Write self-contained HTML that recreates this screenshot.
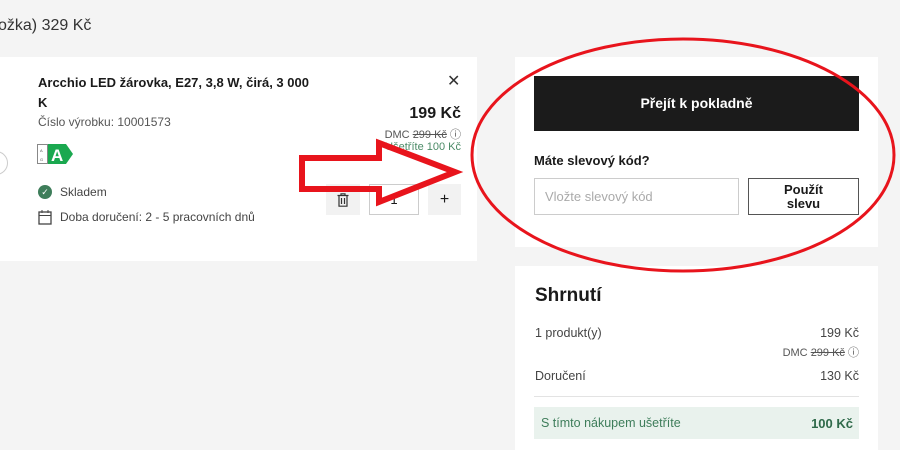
<!DOCTYPE html>
<html><head><meta charset="utf-8"><style>
*{margin:0;padding:0;box-sizing:border-box}
body{width:900px;height:450px;background:#f4f4f4;font-family:"Liberation Sans",sans-serif;color:#1a1a1a;position:relative;overflow:hidden}
.a{position:absolute}
.card{position:absolute;background:#fff}
.g{color:#555}
</style></head><body>
<div class="a" style="left:-2px;top:17px;font-size:16px;color:#333">ožka) 329 Kč</div>

<div class="card" style="left:0;top:57px;width:477px;height:204px"></div>
<div class="a" style="left:-16px;top:151px;width:24px;height:24px;border:1px solid #ccc;border-radius:50%;background:#fff"></div>
<div class="a" style="left:38px;top:73px;font-size:13px;font-weight:bold;line-height:20px;width:280px">Arcchio LED žárovka, E27, 3,8 W, čirá, 3 000 K</div>
<div class="a g" style="left:38px;top:115px;font-size:12px">Číslo výrobku: 10001573</div>
<div class="a" style="left:447px;top:71px;font-size:16px;color:#333">✕</div>
<div class="a" style="left:300px;top:105px;width:161px;text-align:right;font-size:16px;font-weight:bold">199 Kč</div>
<div class="a g" style="left:300px;top:126px;width:161px;text-align:right;font-size:11px">DMC <s>299 Kč</s> ⓘ</div>
<div class="a" style="left:300px;top:141px;width:161px;text-align:right;font-size:11px;color:#4a8a66">Ušetříte 100 Kč</div>
<svg class="a" style="left:37px;top:144px" width="38" height="21"><rect x="0.5" y="0.5" width="10" height="19" fill="#fff" stroke="#888"/><text x="3" y="8" font-size="4" fill="#555">A</text><text x="3" y="17" font-size="4" fill="#555">G</text><path d="M11 0H29L36 10L29 20H11Z" fill="#1aa84f"/><text x="14" y="17" font-size="17" font-weight="bold" fill="#fff" font-family="Liberation Sans">A</text></svg>
<div class="a" style="left:38px;top:185px;width:14px;height:14px;border-radius:50%;background:#3e7d5a;color:#fff;font-size:9px;text-align:center;line-height:14px">✓</div>
<div class="a g" style="left:60px;top:185px;font-size:12px;color:#444">Skladem</div>
<svg class="a" style="left:38px;top:210px" width="14" height="15"><rect x="1" y="2" width="12" height="12" fill="none" stroke="#444" stroke-width="1.3"/><line x1="1" y1="5.5" x2="13" y2="5.5" stroke="#444"/><line x1="4" y1="0" x2="4" y2="3" stroke="#444"/><line x1="10" y1="0" x2="10" y2="3" stroke="#444"/></svg>
<div class="a" style="left:60px;top:210px;font-size:12px;color:#444">Doba doručení: 2 - 5 pracovních dnů</div>
<div class="a" style="left:326px;top:184px;width:34px;height:31px;background:#f2f2f2"></div>
<svg class="a" style="left:337px;top:193px" width="12" height="14"><path d="M0.5 2.5H11.5M4 2.5V0.8H8V2.5M2 2.5V13.2H10V2.5M4.5 5V11M7.5 5V11" fill="none" stroke="#333" stroke-width="1.2"/></svg>
<div class="a" style="left:369px;top:184px;width:50px;height:31px;border:1px solid #ccc;text-align:center;line-height:29px;font-size:13px">1</div>
<div class="a" style="left:428px;top:184px;width:33px;height:31px;background:#f2f2f2;text-align:center;line-height:31px;font-size:16px">+</div>

<div class="card" style="left:515px;top:57px;width:363px;height:190px"></div>
<div class="a" style="left:534px;top:76px;width:325px;height:55px;background:#1b1b1b;color:#fff;font-weight:bold;font-size:14px;text-align:center;line-height:55px">Přejít k pokladně</div>
<div class="a" style="left:534px;top:153px;font-size:13px;font-weight:bold">Máte slevový kód?</div>
<div class="a" style="left:534px;top:178px;width:205px;height:37px;border:1px solid #ccc;color:#aaa;font-size:13px;line-height:35px;padding-left:10px">Vložte slevový kód</div>
<div class="a" style="left:748px;top:178px;width:111px;height:37px;border:1px solid #555;font-size:13px;font-weight:bold;text-align:center;line-height:14px;padding-top:4px">Použít<br>slevu</div>

<div class="card" style="left:515px;top:266px;width:363px;height:184px"></div>
<div class="a" style="left:535px;top:285px;font-size:19px;font-weight:bold">Shrnutí</div>
<div class="a" style="left:535px;top:326px;font-size:12.5px;color:#444">1 produkt(y)</div>
<div class="a" style="left:700px;top:326px;width:159px;text-align:right;font-size:12.5px;color:#444">199 Kč</div>
<div class="a" style="left:700px;top:344px;width:159px;text-align:right;font-size:11px;color:#555">DMC <s>299 Kč</s> ⓘ</div>
<div class="a" style="left:535px;top:369px;font-size:12.5px;color:#444">Doručení</div>
<div class="a" style="left:700px;top:369px;width:159px;text-align:right;font-size:12.5px;color:#444">130 Kč</div>
<div class="a" style="left:534px;top:396px;width:325px;height:1px;background:#e3e3e3"></div>
<div class="a" style="left:534px;top:407px;width:325px;height:32px;background:#e9f2ed"></div>
<div class="a" style="left:541px;top:416px;font-size:12.5px;color:#3e7d5a">S tímto nákupem ušetříte</div>
<div class="a" style="left:700px;top:416px;width:153px;text-align:right;font-size:13px;font-weight:bold;color:#2f6a4a">100 Kč</div>

<svg class="a" style="left:0;top:0" width="900" height="450">
<ellipse cx="683" cy="155" rx="211" ry="116" fill="none" stroke="#e8141c" stroke-width="3"/>
<path d="M302 158H379V143L455 172L379 202V189H302Z" fill="none" stroke="#e8141c" stroke-width="6" stroke-linejoin="miter"/>
</svg>
</body></html>
